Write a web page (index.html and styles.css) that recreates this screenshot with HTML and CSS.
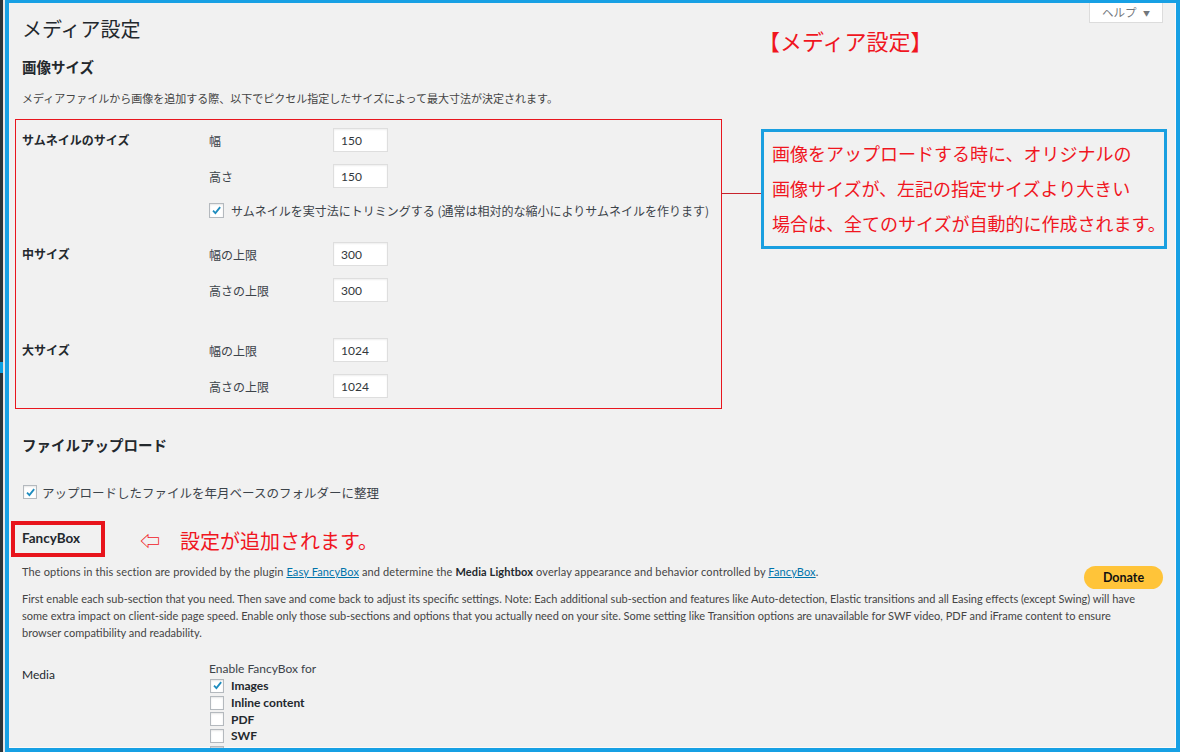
FILE: index.html
```html
<!DOCTYPE html>
<html lang="ja">

<head>
    <meta charset="UTF-8">
    <meta name="viewport" content="width=device-width, initial-scale=1.0">
    <title>メディア設定</title>
    <link rel="stylesheet" href="styles.css">
</head>

<body>
    <div class="screen">
        <div class="admin-menu"><span class="menu-current"></span></div>

        <div class="frame">
            <div class="help-tab">ヘルプ <span class="caret">▼</span></div>

            <div class="wrap">
                <h1>メディア設定</h1>

                <h2>画像サイズ</h2>
                <p class="desc">メディアファイルから画像を追加する際、以下でピクセル指定したサイズによって最大寸法が決定されます。</p>

                <div class="size-box">
                    <div class="size-row">
                        <div class="row-label">サムネイルのサイズ</div>
                        <div class="fields">
                            <div class="field"><label>幅</label><input class="num" type="text" value="150"></div>
                            <div class="field"><label>高さ</label><input class="num" type="text" value="150"></div>
                            <label class="check crop">
                                <span class="cb"><svg viewBox="0 0 12 12"><polyline points="2.2,6.2 4.8,8.8 10,2.4" /></svg></span>
                                サムネイルを実寸法にトリミングする (通常は相対的な縮小によりサムネイルを作ります)
                            </label>
                        </div>
                    </div>

                    <div class="size-row">
                        <div class="row-label">中サイズ</div>
                        <div class="fields">
                            <div class="field"><label>幅の上限</label><input class="num" type="text" value="300"></div>
                            <div class="field"><label>高さの上限</label><input class="num" type="text" value="300"></div>
                        </div>
                    </div>

                    <div class="size-row large">
                        <div class="row-label">大サイズ</div>
                        <div class="fields">
                            <div class="field"><label>幅の上限</label><input class="num" type="text" value="1024"></div>
                            <div class="field"><label>高さの上限</label><input class="num" type="text" value="1024"></div>
                        </div>
                    </div>
                </div>

                <h2 class="upload-title">ファイルアップロード</h2>
                <label class="check upload">
                    <span class="cb"><svg viewBox="0 0 12 12"><polyline points="2.2,6.2 4.8,8.8 10,2.4" /></svg></span>
                    アップロードしたファイルを年月ベースのフォルダーに整理
                </label>

                <div class="fancybox-title">
                    <h3>FancyBox</h3>
                </div>

                <div class="fb-intro">
                    <p>The options in this section are provided by the plugin <a href="#">Easy FancyBox</a> and determine the <strong>Media Lightbox</strong> overlay appearance and behavior controlled by <a href="#">FancyBox</a>.</p>
                    <button class="donate">Donate</button>
                </div>

                <p class="fb-note">First enable each sub-section that you need. Then save and come back to adjust its specific settings. Note: Each additional sub-section and features like Auto-detection, Elastic transitions and all Easing effects (except Swing) will have some extra impact on client-side page speed. Enable only those sub-sections and options that you actually need on your site. Some setting like Transition options are unavailable for SWF video, PDF and iFrame content to ensure<br>browser compatibility and readability.</p>

                <div class="media-row">
                    <div class="media-label">Media</div>
                    <div class="media-options">
                        <div class="opt-head">Enable FancyBox for</div>
                        <label class="opt"><span class="cb"><svg viewBox="0 0 12 12"><polyline points="2.2,6.2 4.8,8.8 10,2.4" /></svg></span>Images</label>
                        <label class="opt"><span class="cb"></span>Inline content</label>
                        <label class="opt"><span class="cb"></span>PDF</label>
                        <label class="opt"><span class="cb"></span>SWF</label>
                        <label class="opt"><span class="cb off"></span></label>
                    </div>
                </div>
            </div>
        </div>

        <!-- annotations drawn over the screenshot -->
        <div class="note note-title">【メディア設定】</div>
        <div class="note-line"></div>
        <div class="callout">
            画像をアップロードする時に、オリジナルの<br>
            画像サイズが、左記の指定サイズより大きい<br>
            場合は、全てのサイズが自動的に作成されます。
        </div>
        <div class="note note-added">⇦　設定が追加されます。</div>
    </div>
</body>

</html>
```

FILE: styles.css
```css
:root {
    --frame-blue: #17a0e4;
    --note-red: #f0161f;
    --text-dark: #23282d;
    --text: #444;
    --link: #0073aa;
}

body {
    margin: 0;
    font-family: 'Lato', 'Noto Sans CJK JP', sans-serif;
    background: #f1f1f1;
    color: var(--text);
}

.screen {
    position: relative;
    display: flex;
    height: 752px;
    overflow: hidden;
}

.admin-menu {
    position: relative;
    width: 3px;
    background: #2c3338;
    border-right: 2px solid #e6e6e6;
}

.menu-current {
    position: absolute;
    top: 362px;
    left: 0;
    width: 3px;
    height: 11px;
    background: #0ea0e0;
}

.frame {
    position: relative;
    flex: 1;
    border-style: solid;
    border-color: var(--frame-blue);
    border-width: 3px 4px 4px 4px;
    box-shadow: inset -1px -1px 0 #fafafa;
    overflow: hidden;
}

.help-tab {
    position: absolute;
    top: 0;
    right: 13px;
    width: 74px;
    height: 20px;
    box-sizing: border-box;
    background: #fff;
    border: 1px solid #dcdcdc;
    border-top: none;
    font-family: 'Noto Sans CJK JP', sans-serif;
    font-size: 11.5px;
    line-height: 18px;
    color: #72777c;
    text-align: center;
}

.caret {
    font-size: 7px;
    margin-left: 4px;
    vertical-align: 1px;
}

.wrap {
    padding: 12px 13px 0 13px;
}

h1 {
    margin: 0;
    font-family: 'Noto Sans CJK JP', sans-serif;
    font-size: 20px;
    font-weight: 400;
    line-height: 28px;
    color: var(--text-dark);
}

h2 {
    margin: 14px 0 0;
    font-family: 'Noto Sans CJK JP', sans-serif;
    font-size: 14.5px;
    font-weight: 700;
    line-height: 20px;
    color: var(--text-dark);
}

.desc {
    margin: 12.5px 0 0;
    font-family: 'Noto Sans CJK JP', sans-serif;
    font-size: 11px;
    line-height: 16px;
}

.size-box {
    width: 707px;
    box-sizing: border-box;
    margin: 13.5px 0 0 -7px;
    padding: 8px 0 10px 6px;
    border: 1px solid #e8161e;
    font-family: 'Noto Sans CJK JP', sans-serif;
}

.size-row {
    display: flex;
}

.size-row+.size-row {
    margin-top: 24px;
}

.size-row.large {
    margin-top: 36px;
}

.row-label {
    width: 187px;
    font-size: 12px;
    font-weight: 700;
    line-height: 24px;
    color: var(--text-dark);
}

.fields {
    display: flex;
    flex-direction: column;
    gap: 12px;
}

.field {
    display: flex;
    align-items: center;
    height: 24px;
}

.field label {
    width: 124px;
    font-size: 12px;
    color: #3c434a;
}

.num {
    width: 55px;
    height: 24px;
    box-sizing: border-box;
    margin: 0;
    padding: 0 7px;
    background: #fff;
    border: 1px solid #dedede;
    box-shadow: inset 0 1px 2px rgba(0, 0, 0, 0.07);
    font-family: 'Lato', sans-serif;
    font-size: 12px;
    color: #32373c;
}

.check {
    display: flex;
    align-items: center;
    font-family: 'Noto Sans CJK JP', sans-serif;
    color: #3c434a;
}

.check.crop {
    margin-top: 3px;
    height: 15px;
    font-size: 12px;
}

.check.crop .cb {
    width: 15px;
    height: 15px;
    margin-right: 7px;
}

.cb {
    display: inline-flex;
    align-items: center;
    justify-content: center;
    flex-shrink: 0;
    width: 14px;
    height: 14px;
    box-sizing: border-box;
    background: #fff;
    border: 1px solid #b4b9be;
    box-shadow: inset 0 1px 2px rgba(0, 0, 0, 0.1);
}

.cb svg {
    width: 11px;
    height: 11px;
}

.cb polyline {
    fill: none;
    stroke: #1e8cbe;
    stroke-width: 2;
}

.cb.off {
    background: #e6e6e6;
}

.upload-title {
    margin-top: 26px;
}

.check.upload {
    margin-top: 27px;
    height: 20px;
    font-size: 12.5px;
}

.check.upload .cb {
    margin: 0 5px 0 1px;
}

.fancybox-title {
    width: 94px;
    height: 36px;
    box-sizing: border-box;
    margin: 19px 0 0 -11px;
    padding-left: 7px;
    border: 4px solid #e8141c;
}

.fancybox-title h3 {
    margin: 0;
    font-size: 13.5px;
    font-weight: 700;
    line-height: 26px;
    color: var(--text-dark);
}

.fb-intro {
    display: flex;
    justify-content: space-between;
    align-items: flex-start;
    margin-top: 5.5px;
}

.fb-intro p,
.fb-note {
    margin: 0;
    font-size: 11px;
    line-height: 17px;
    color: var(--text);
}

.fb-intro p {
    letter-spacing: 0.12px;
}

.fb-intro a {
    color: var(--link);
}

.fb-intro strong {
    color: var(--text-dark);
}

.donate {
    width: 79px;
    height: 23px;
    margin: 3.5px 0 -10px;
    padding: 0;
    background: #ffc439;
    border: none;
    border-radius: 12px;
    font-family: 'Lato', sans-serif;
    font-size: 12.5px;
    font-weight: 700;
    color: #111;
}

.fb-note {
    margin-top: 10px;
}

.media-row {
    display: flex;
    margin-top: 19px;
}

.media-label {
    width: 187px;
    padding-top: 6px;
    font-size: 12px;
    line-height: 17px;
    color: var(--text-dark);
}

.opt-head {
    font-size: 12px;
    line-height: 17px;
    color: #3c434a;
}

.opt {
    display: flex;
    align-items: center;
    height: 16.7px;
    font-size: 12px;
    font-weight: 700;
    color: var(--text-dark);
}

.opt:first-of-type {
    margin-top: 1px;
}

.opt .cb {
    margin: 0 7px 0 1px;
}

.note {
    position: absolute;
    font-family: 'Noto Sans CJK JP', sans-serif;
    color: var(--note-red);
    white-space: nowrap;
}

.note-title {
    left: 758px;
    top: 26px;
    font-size: 22px;
    line-height: 28px;
}

.note-added {
    left: 140px;
    top: 528px;
    font-size: 20px;
    line-height: 26px;
}

.note-line {
    position: absolute;
    left: 721px;
    top: 193px;
    width: 40px;
    height: 1px;
    background: #c8232c;
}

.callout {
    position: absolute;
    left: 761px;
    top: 129px;
    width: 406px;
    height: 120px;
    box-sizing: border-box;
    padding: 4px 0 0 8px;
    border: 3px solid #1a9fe0;
    font-family: 'Noto Sans CJK JP', sans-serif;
    font-size: 18px;
    line-height: 35px;
    color: var(--note-red);
    white-space: nowrap;
}
```
